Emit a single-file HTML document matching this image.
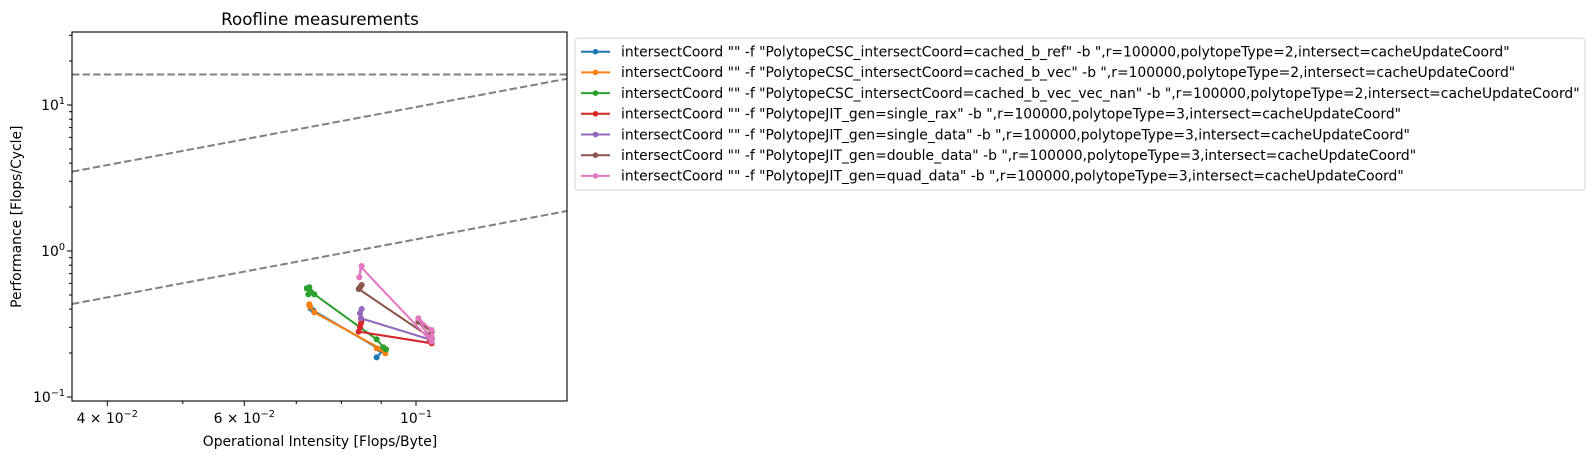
<!DOCTYPE html>
<html><head><meta charset="utf-8"><style>
html,body{margin:0;padding:0;background:#fff;}
svg{display:block;font-family:"DejaVu Sans","Liberation Sans",sans-serif;}
</style></head><body>
<svg width="1594" height="459" viewBox="0 0 1594 459" xmlns="http://www.w3.org/2000/svg">
<rect width="1594" height="459" fill="#fff"/>
<text x="320" y="25" font-size="16.7" text-anchor="middle" fill="#000">Roofline measurements</text>
<defs><clipPath id="c"><rect x="72" y="32" width="495" height="369"/></clipPath></defs>
<g clip-path="url(#c)" stroke="#808080" stroke-width="2" stroke-dasharray="7.4,3.2" fill="none">
<line x1="72" y1="74.5" x2="567" y2="74.5"/>
<line x1="72" y1="171.7" x2="567" y2="78.7"/>
<line x1="72" y1="304" x2="567" y2="211"/>
</g>
<g clip-path="url(#c)" transform="translate(280,240) scale(0.3333)" fill="none" stroke-width="6.25" stroke-linejoin="round">
<g stroke="#1f77b4" fill="#1f77b4"><polyline fill="none" points="88,195 92,205 100,212 300,328 310,330 290,352"/>
<circle cx="88" cy="195" r="6"/><circle cx="92" cy="205" r="6"/><circle cx="100" cy="212" r="6"/><circle cx="300" cy="328" r="6"/><circle cx="310" cy="330" r="6"/><circle cx="290" cy="352" r="6"/></g>
<g stroke="#ff7f0e" fill="#ff7f0e"><polyline fill="none" points="88,193 90,200 103,217 305,328 316,340 290,325"/>
<circle cx="88" cy="193" r="6"/><circle cx="90" cy="200" r="6"/><circle cx="103" cy="217" r="6"/><circle cx="305" cy="328" r="6"/><circle cx="316" cy="340" r="6"/><circle cx="290" cy="325" r="6"/></g>
<g stroke="#2ca02c" fill="#2ca02c"><polyline fill="none" points="80,145 88,142 92,155 85,163 103,163 290,298 310,322 318,328"/>
<circle cx="80" cy="145" r="6"/><circle cx="88" cy="142" r="6"/><circle cx="92" cy="155" r="6"/><circle cx="85" cy="163" r="6"/><circle cx="103" cy="163" r="6"/><circle cx="290" cy="298" r="6"/><circle cx="310" cy="322" r="6"/><circle cx="318" cy="328" r="6"/></g>
<g stroke="#d62728" fill="#d62728"><polyline fill="none" points="245,240 243,250 240,262 236,275 455,310 450,300"/>
<circle cx="245" cy="240" r="6"/><circle cx="243" cy="250" r="6"/><circle cx="240" cy="262" r="6"/><circle cx="236" cy="275" r="6"/><circle cx="455" cy="310" r="6"/><circle cx="450" cy="300" r="6"/></g>
<g stroke="#9467bd" fill="#9467bd"><polyline fill="none" points="245,207 240,220 243,235 455,300 450,290 455,310"/>
<circle cx="245" cy="207" r="6"/><circle cx="240" cy="220" r="6"/><circle cx="243" cy="235" r="6"/><circle cx="455" cy="300" r="6"/><circle cx="450" cy="290" r="6"/></g>
<g stroke="#8c564b" fill="#8c564b"><polyline fill="none" points="245,135 240,142 236,147 455,295 415,245 455,275 445,290"/>
<circle cx="245" cy="135" r="6"/><circle cx="240" cy="142" r="6"/><circle cx="236" cy="147" r="6"/><circle cx="455" cy="295" r="6"/><circle cx="415" cy="245" r="6"/><circle cx="455" cy="275" r="6"/></g>
<g stroke="#e377c2" fill="#e377c2"><polyline fill="none" points="245,78 238,112 242,80 455,305 415,235 455,270 455,290"/>
<circle cx="245" cy="78" r="6"/><circle cx="238" cy="112" r="6"/><circle cx="455" cy="305" r="6"/><circle cx="415" cy="235" r="6"/><circle cx="455" cy="270" r="6"/><circle cx="455" cy="290" r="6"/></g>
</g>
<rect x="72" y="32" width="495" height="369" fill="none" stroke="#000" stroke-width="1.1"/>
<g stroke="#000" stroke-width="1">
<line x1="67" y1="105" x2="72" y2="105"/><line x1="67" y1="251" x2="72" y2="251"/><line x1="67" y1="397" x2="72" y2="397"/>
<line x1="69" y1="353" x2="72" y2="353"/><line x1="69" y1="327.3" x2="72" y2="327.3"/><line x1="69" y1="309.1" x2="72" y2="309.1"/><line x1="69" y1="295" x2="72" y2="295"/><line x1="69" y1="283.4" x2="72" y2="283.4"/><line x1="69" y1="273.6" x2="72" y2="273.6"/><line x1="69" y1="265.2" x2="72" y2="265.2"/><line x1="69" y1="257.7" x2="72" y2="257.7"/>
<line x1="69" y1="207" x2="72" y2="207"/><line x1="69" y1="181.3" x2="72" y2="181.3"/><line x1="69" y1="163.1" x2="72" y2="163.1"/><line x1="69" y1="149" x2="72" y2="149"/><line x1="69" y1="137.4" x2="72" y2="137.4"/><line x1="69" y1="127.6" x2="72" y2="127.6"/><line x1="69" y1="119.2" x2="72" y2="119.2"/><line x1="69" y1="111.7" x2="72" y2="111.7"/>
<line x1="69" y1="61" x2="72" y2="61"/><line x1="69" y1="35.3" x2="72" y2="35.3"/>
<line x1="107.3" y1="401" x2="107.3" y2="406"/><line x1="244.3" y1="401" x2="244.3" y2="406"/><line x1="416" y1="401" x2="416" y2="406"/>
<line x1="182.7" y1="401" x2="182.7" y2="404"/><line x1="296.3" y1="401" x2="296.3" y2="404"/><line x1="341.4" y1="401" x2="341.4" y2="404"/><line x1="381.2" y1="401" x2="381.2" y2="404"/>
</g>
<g font-size="13.9" fill="#000">
<text x="65" y="110" text-anchor="end">10<tspan font-size="9.7" dy="-6">1</tspan></text>
<text x="65" y="256" text-anchor="end">10<tspan font-size="9.7" dy="-6">0</tspan></text>
<text x="65" y="402" text-anchor="end">10<tspan font-size="9.7" dy="-6">−1</tspan></text>
<text x="107.3" y="423" text-anchor="middle">4 × 10<tspan font-size="9.7" dy="-6">−2</tspan></text>
<text x="244.3" y="423" text-anchor="middle">6 × 10<tspan font-size="9.7" dy="-6">−2</tspan></text>
<text x="416" y="423" text-anchor="middle">10<tspan font-size="9.7" dy="-6">−1</tspan></text>
<text x="320" y="446" text-anchor="middle">Operational Intensity [Flops/Byte]</text>
<text transform="translate(21,216.7) rotate(-90)" text-anchor="middle">Performance [Flops/Cycle]</text>
</g>
<rect x="575" y="38.3" width="1010" height="151.7" rx="3" fill="#fff" stroke="#d0d0d0" stroke-width="1"/>
<g stroke-width="2">
<g stroke="#1f77b4"><line x1="581" y1="51.7" x2="610" y2="51.7"/><circle cx="595.5" cy="51.7" r="1.8" fill="#1f77b4"/></g>
<g stroke="#ff7f0e"><line x1="581" y1="72.4" x2="610" y2="72.4"/><circle cx="595.5" cy="72.4" r="1.8" fill="#ff7f0e"/></g>
<g stroke="#2ca02c"><line x1="581" y1="93.1" x2="610" y2="93.1"/><circle cx="595.5" cy="93.1" r="1.8" fill="#2ca02c"/></g>
<g stroke="#d62728"><line x1="581" y1="113.8" x2="610" y2="113.8"/><circle cx="595.5" cy="113.8" r="1.8" fill="#d62728"/></g>
<g stroke="#9467bd"><line x1="581" y1="134.5" x2="610" y2="134.5"/><circle cx="595.5" cy="134.5" r="1.8" fill="#9467bd"/></g>
<g stroke="#8c564b"><line x1="581" y1="155.2" x2="610" y2="155.2"/><circle cx="595.5" cy="155.2" r="1.8" fill="#8c564b"/></g>
<g stroke="#e377c2"><line x1="581" y1="175.9" x2="610" y2="175.9"/><circle cx="595.5" cy="175.9" r="1.8" fill="#e377c2"/></g>
</g>
<g font-size="13.9" fill="#000">
<text x="621" y="56.5">intersectCoord "" -f "PolytopeCSC_intersectCoord=cached_b_ref" -b ",r=100000,polytopeType=2,intersect=cacheUpdateCoord"</text>
<text x="621" y="77.2">intersectCoord "" -f "PolytopeCSC_intersectCoord=cached_b_vec" -b ",r=100000,polytopeType=2,intersect=cacheUpdateCoord"</text>
<text x="621" y="97.9">intersectCoord "" -f "PolytopeCSC_intersectCoord=cached_b_vec_vec_nan" -b ",r=100000,polytopeType=2,intersect=cacheUpdateCoord"</text>
<text x="621" y="118.6">intersectCoord "" -f "PolytopeJIT_gen=single_rax" -b ",r=100000,polytopeType=3,intersect=cacheUpdateCoord"</text>
<text x="621" y="139.3">intersectCoord "" -f "PolytopeJIT_gen=single_data" -b ",r=100000,polytopeType=3,intersect=cacheUpdateCoord"</text>
<text x="621" y="160">intersectCoord "" -f "PolytopeJIT_gen=double_data" -b ",r=100000,polytopeType=3,intersect=cacheUpdateCoord"</text>
<text x="621" y="180.7">intersectCoord "" -f "PolytopeJIT_gen=quad_data" -b ",r=100000,polytopeType=3,intersect=cacheUpdateCoord"</text>
</g>
</svg>
</body></html>
